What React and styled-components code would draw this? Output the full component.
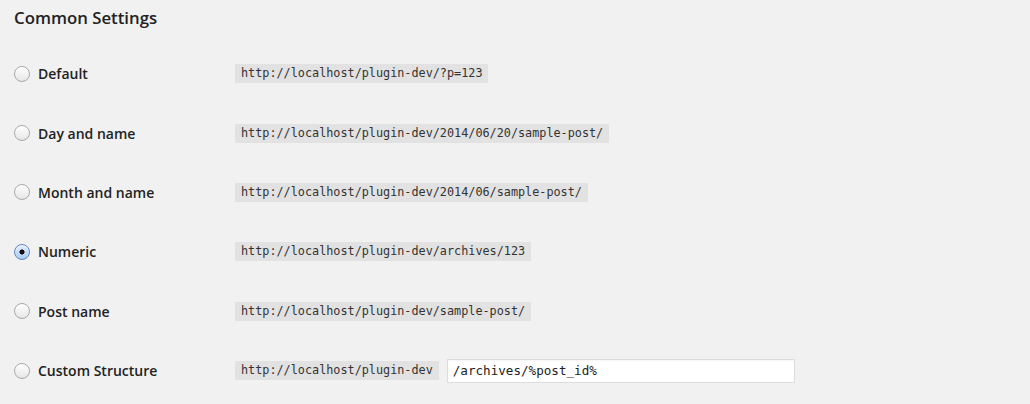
import styled, { createGlobalStyle } from "styled-components";

const Global = createGlobalStyle`
	html, body {
		margin: 0;
		padding: 0;
		background: #f1f1f1;
	}
	body {
		font-family: "Open Sans", "Liberation Sans", sans-serif;
		color: #222;
	}
`;

const Page = styled.div`
	padding: 0 14px;
	width: 1030px;
	height: 404px;
	box-sizing: border-box;
	overflow: hidden;
`;

const Title = styled.h3`
	margin: 0;
	height: 44px;
	padding-top: 7px;
	box-sizing: border-box;
	font-size: 16.8px;
	font-weight: 600;
	line-height: 22px;
	color: #222;
`;

const Rows = styled.div`
	display: grid;
	grid-auto-rows: 59.4px;
`;

const Row = styled.div`
	display: flex;
	align-items: center;
`;

const LabelCell = styled.label`
	width: 221px;
	display: flex;
	align-items: center;
	gap: 8px;
	font-size: 14px;
	font-weight: 600;
	color: #222;
`;

const Radio = styled.span`
	width: 16px;
	height: 16px;
	box-sizing: border-box;
	border-radius: 50%;
	border: 1px solid ${(p) => (p.checked ? "#5d86c2" : "#a9a9a9")};
	background: ${(p) =>
		p.checked
			? "radial-gradient(circle at 50% 50%, #111 0 2.3px, transparent 2.8px), linear-gradient(#e4f0fd, #a9cbf3)"
			: "linear-gradient(#ffffff, #e6e6e6)"};
	box-shadow: inset 0 1px 1px rgba(255, 255, 255, 0.8);
	flex: none;
`;

const Code = styled.code`
	font-family: "DejaVu Sans Mono", "Liberation Mono", monospace;
	font-size: 11.8px;
	line-height: 13px;
	padding: 3px 6px;
	background: #e2e2e2;
	color: #333;
`;

const Field = styled.input`
	margin-left: 8px;
	width: 348px;
	height: 24px;
	box-sizing: border-box;
	border: 1px solid #dddddd;
	background: #fff;
	padding: 0 5px;
	font-family: "DejaVu Sans Mono", "Liberation Mono", monospace;
	font-size: 12.6px;
	color: #222;
	outline: none;
	box-shadow: inset 0 1px 2px rgba(0, 0, 0, 0.04);
`;

const options = [
	{ label: "Default", url: "http://localhost/plugin-dev/?p=123" },
	{ label: "Day and name", url: "http://localhost/plugin-dev/2014/06/20/sample-post/" },
	{ label: "Month and name", url: "http://localhost/plugin-dev/2014/06/sample-post/" },
	{ label: "Numeric", url: "http://localhost/plugin-dev/archives/123", checked: true },
	{ label: "Post name", url: "http://localhost/plugin-dev/sample-post/" },
];

const App = () => {
	return (
		<>
			<Global />
			<Page>
				<Title>Common Settings</Title>
				<Rows>
					{options.map((o) => (
						<Row key={o.label}>
							<LabelCell>
								<Radio checked={o.checked} />
								{o.label}
							</LabelCell>
							<Code>{o.url}</Code>
						</Row>
					))}
					<Row>
						<LabelCell>
							<Radio />
							Custom Structure
						</LabelCell>
						<Code>http://localhost/plugin-dev</Code>
						<Field defaultValue="/archives/%post_id%" readOnly />
					</Row>
				</Rows>
			</Page>
		</>
	);
};

export default App;
